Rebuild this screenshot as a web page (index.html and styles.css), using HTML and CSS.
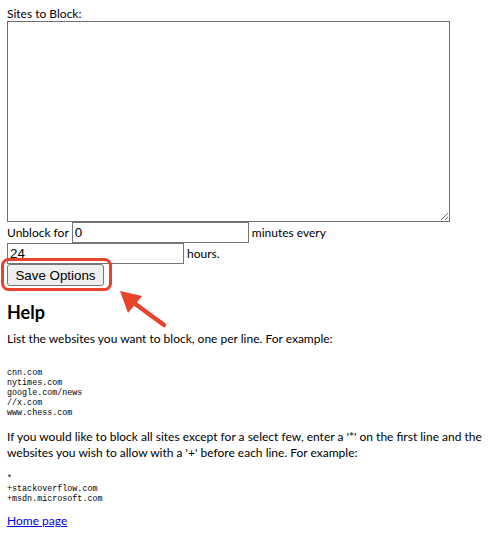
FILE: index.html
```html
<!DOCTYPE html>
<html>
<head>
<meta charset="utf-8">
<title>Options</title>
<link rel="stylesheet" href="styles.css">
</head>
<body>
<div class="page">
  <div class="field-label">Sites to Block:</div>
  <textarea class="sites"></textarea>
  <div class="row">
    <span>Unblock for</span>
    <input class="num" type="text" value="0">
    <span>minutes every</span>
  </div>
  <div class="row">
    <input class="num" type="text" value="24">
    <span>hours.</span>
  </div>
  <div class="row btn-row">
    <button class="save">Save Options</button>
  </div>

  <h2 class="help-title">Help</h2>
  <p class="text first">List the websites you want to block, one per line. For example:</p>
  <pre class="code first-code">cnn.com
nytimes.com
google.com/news
//x.com
www.chess.com</pre>
  <p class="text second">If you would like to block all sites except for a select few, enter a '*' on the first line and the websites you wish to allow with a '+' before each line. For example:</p>
  <pre class="code second-code">*
+stackoverflow.com
+msdn.microsoft.com</pre>
  <p class="link-line"><a href="#">Home page</a></p>

  <svg class="annotation" width="489" height="535" viewBox="0 0 489 535">
    <rect x="2.5" y="259.5" width="108" height="30" rx="6" ry="6" fill="none" stroke="#e8442b" stroke-width="3"/>
    <line x1="134" y1="303" x2="164" y2="325" stroke="#e8442b" stroke-width="4.5" stroke-linecap="round"/>
    <polygon points="120,291 142,296 128,313" fill="#e8442b"/>
  </svg>
</div>
</body>
</html>
```

FILE: styles.css
```css
html, body {
  margin: 0;
  padding: 0;
  background: #ffffff;
}

body {
  font-family: Lato, "Noto Sans", sans-serif;
  font-size: 12px;
  color: #000000;
}

.page {
  padding: 8px 0 8px 7px;
}

.field-label {
  height: 13px;
  line-height: 11px;
}

.sites {
  display: block;
  box-sizing: border-box;
  width: 443px;
  height: 201px;
  margin: 0;
  border: 1px solid #6f6f6f;
  padding: 2px;
  font-family: "Liberation Mono", monospace;
  font-size: 13px;
  resize: both;
}

.row {
  display: flex;
  align-items: center;
  gap: 3px;
  height: 21px;
}

.num {
  box-sizing: border-box;
  width: 177px;
  height: 21px;
  margin: 0;
  padding: 1px 2px;
  border: 1px solid #767676;
  border-radius: 0;
  font-family: "Liberation Sans", Arial, sans-serif;
  font-size: 13.33px;
  color: #000000;
  background: #ffffff;
}

.btn-row {
  height: 22px;
}

.save {
  box-sizing: border-box;
  width: 97px;
  height: 22px;
  margin: 0;
  padding: 1px 6px;
  border: 1px solid #767676;
  border-radius: 3px;
  background: #efefef;
  font-family: "Liberation Sans", Arial, sans-serif;
  font-size: 13.33px;
  color: #000000;
}

.help-title {
  font-size: 18px;
  font-weight: bold;
  line-height: 24px;
  margin: 14px 0 0;
}

.text {
  margin: 0;
  line-height: 16px;
  width: 484px;
}

.text.first {
  margin-top: 7px;
}

.text.second {
  margin-top: 11px;
}

.code {
  font-family: "Liberation Mono", monospace;
  font-size: 8.4px;
  line-height: 10px;
  margin: 0;
}

.first-code {
  margin-top: 21px;
}

.second-code {
  margin-top: 13px;
}

.link-line {
  margin: 9px 0 0;
  line-height: 16px;
}

.link-line a {
  color: #0000ee;
}

.annotation {
  position: absolute;
  left: 0;
  top: 0;
  pointer-events: none;
}
```
